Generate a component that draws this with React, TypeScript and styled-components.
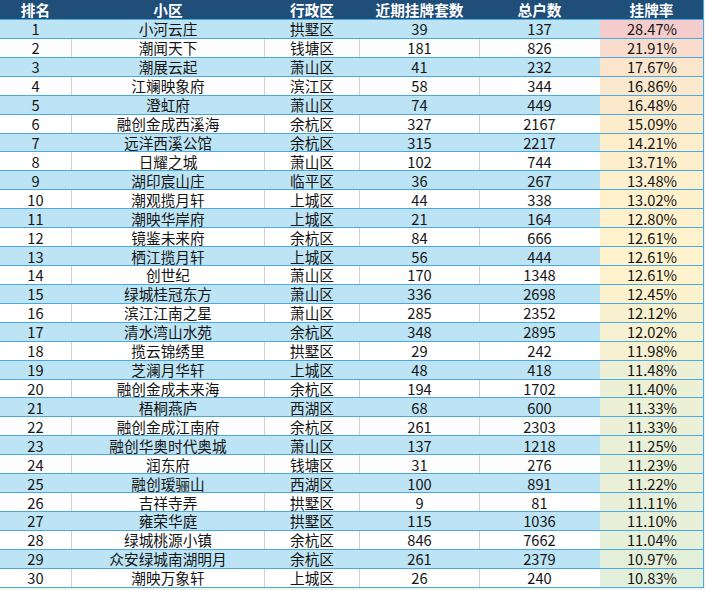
import React from "react"
import styled, { createGlobalStyle } from "styled-components"

const GlobalStyle = createGlobalStyle`
  html, body {
    margin: 0;
    padding: 0;
    background: #f2f2f2;
  }
  body {
    font-family: "Noto Sans CJK SC", "Noto Sans", sans-serif;
  }
`

type Row = [number, string, string, number, number, number]

const rows: Row[] = [
  [1, "小河云庄", "拱墅区", 39, 137, 28.47],
  [2, "潮闻天下", "钱塘区", 181, 826, 21.91],
  [3, "潮展云起", "萧山区", 41, 232, 17.67],
  [4, "江斓映象府", "滨江区", 58, 344, 16.86],
  [5, "澄虹府", "萧山区", 74, 449, 16.48],
  [6, "融创金成西溪海", "余杭区", 327, 2167, 15.09],
  [7, "远洋西溪公馆", "余杭区", 315, 2217, 14.21],
  [8, "日耀之城", "萧山区", 102, 744, 13.71],
  [9, "湖印宸山庄", "临平区", 36, 267, 13.48],
  [10, "潮观揽月轩", "上城区", 44, 338, 13.02],
  [11, "潮映华岸府", "上城区", 21, 164, 12.8],
  [12, "镜鉴未来府", "余杭区", 84, 666, 12.61],
  [13, "栖江揽月轩", "上城区", 56, 444, 12.61],
  [14, "创世纪", "萧山区", 170, 1348, 12.61],
  [15, "绿城桂冠东方", "萧山区", 336, 2698, 12.45],
  [16, "滨江江南之星", "萧山区", 285, 2352, 12.12],
  [17, "清水湾山水苑", "余杭区", 348, 2895, 12.02],
  [18, "揽云锦绣里", "拱墅区", 29, 242, 11.98],
  [19, "芝澜月华轩", "上城区", 48, 418, 11.48],
  [20, "融创金成未来海", "余杭区", 194, 1702, 11.4],
  [21, "梧桐燕庐", "西湖区", 68, 600, 11.33],
  [22, "融创金成江南府", "余杭区", 261, 2303, 11.33],
  [23, "融创华奥时代奥城", "萧山区", 137, 1218, 11.25],
  [24, "润东府", "钱塘区", 31, 276, 11.23],
  [25, "融创瑷骊山", "西湖区", 100, 891, 11.22],
  [26, "吉祥寺弄", "拱墅区", 9, 81, 11.11],
  [27, "雍荣华庭", "拱墅区", 115, 1036, 11.1],
  [28, "绿城桃源小镇", "余杭区", 846, 7662, 11.04],
  [29, "众安绿城南湖明月", "余杭区", 261, 2379, 10.97],
  [30, "潮映万象轩", "上城区", 26, 240, 10.83],
]

const headers = ["排名", "小区", "行政区", "近期挂牌套数", "总户数", "挂牌率"]

const LOW = [226, 239, 218]
const MID = [255, 242, 204]
const HIGH = [244, 204, 204]
const rates = rows.map((r) => r[5])
const minRate = Math.min(...rates)
const maxRate = Math.max(...rates)
const midRate = 12.53

const mix = (a: number[], b: number[], t: number) =>
  `rgb(${a.map((v, i) => Math.round(v + (b[i] - v) * t)).join(",")})`

const rateColor = (v: number) =>
  v >= midRate
    ? mix(MID, HIGH, (v - midRate) / (maxRate - midRate))
    : mix(MID, LOW, (midRate - v) / (midRate - minRate))

const COLS = "72px 193px 95px 120px 120px 104px"

const Sheet = styled.div`
  width: 704px;
  display: flex;
  flex-direction: column;
  background: #ffffff;
`

const HeadRow = styled.div`
  display: grid;
  grid-template-columns: ${COLS};
  height: 20px;
  box-sizing: border-box;
  background: #1f4e78;
  border-bottom: 1px solid #4aa9e0;
`

const HeadCell = styled.div<{ $last?: boolean }>`
  display: flex;
  align-items: center;
  justify-content: center;
  color: #ffffff;
  font-weight: 700;
  font-size: 14.67px;
  line-height: 19px;
  box-sizing: border-box;
  border-right: 1px solid ${(p) => (p.$last ? "#4aa9e0" : "#1f4e78")};
`

const DataRow = styled.div<{ $striped: boolean }>`
  display: grid;
  grid-template-columns: ${COLS};
  height: 18.93px;
  box-sizing: border-box;
  background: ${(p) => (p.$striped ? "#bde4f5" : "#ffffff")};
  border-bottom: 1px solid #4aa9e0;
`

const Cell = styled.div<{ $line: string }>`
  display: flex;
  align-items: center;
  justify-content: center;
  font-size: 14.67px;
  line-height: 17px;
  color: #141414;
  white-space: nowrap;
  box-sizing: border-box;
  border-right: 1px solid ${(p) => p.$line};
`

const RateCell = styled(Cell)`
  padding-left: 1px;
`

export default function App() {
  return (
    <>
      <GlobalStyle />
      <Sheet>
        <HeadRow>
          {headers.map((h, i) => (
            <HeadCell key={h} $last={i === headers.length - 1}>
              {h}
            </HeadCell>
          ))}
        </HeadRow>
        {rows.map(([rank, name, district, listed, total, rate]) => {
          const striped = rank % 2 === 1
          const bg = striped ? "#bde4f5" : "#ffffff"
          const line = striped ? "#bde4f5" : "#cfcfcf"
          return (
            <DataRow key={rank} $striped={striped}>
              <Cell $line={line}>{rank}</Cell>
              <Cell $line={line}>{name}</Cell>
              <Cell $line={line}>{district}</Cell>
              <Cell $line={line}>{listed}</Cell>
              <Cell $line={bg}>{total}</Cell>
              <RateCell $line="#4aa9e0" style={{ background: rateColor(rate) }}>
                {rate.toFixed(2)}%
              </RateCell>
            </DataRow>
          )
        })}
      </Sheet>
    </>
  )
}
